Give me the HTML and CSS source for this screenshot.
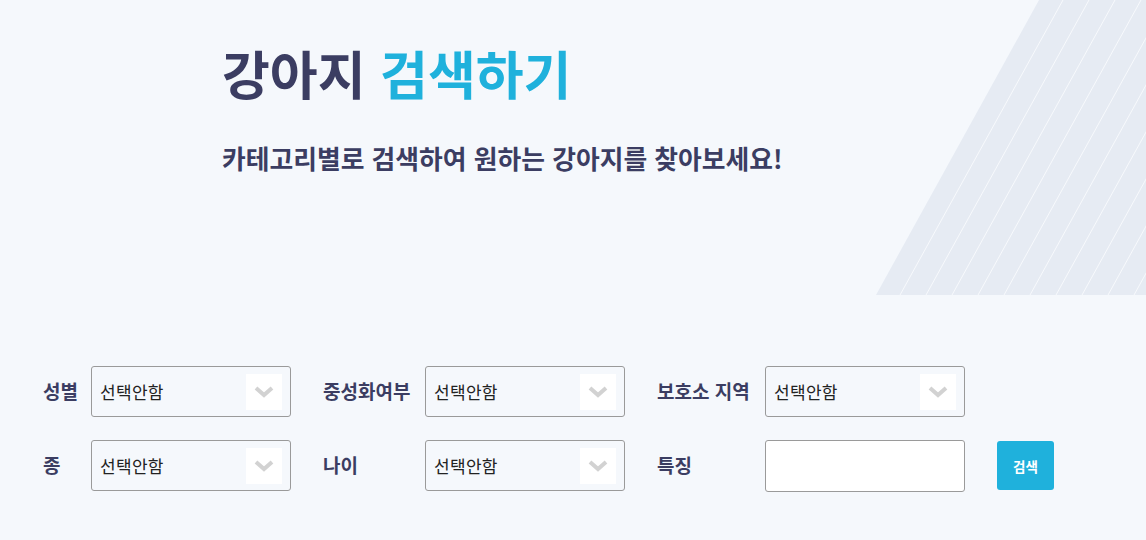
FILE: index.html
```html
<!DOCTYPE html>
<html lang="ko">
<head>
<meta charset="utf-8">
<link rel="stylesheet" href="styles.css">
</head>
<body>
<header class="hero">
  <svg class="hero-deco" viewBox="0 0 270 295" width="270" height="295" aria-hidden="true">
    <defs>
      <clipPath id="shape"><polygon points="0,295 163,0 270,0 270,295"/></clipPath>
    </defs>
    <polygon points="0,295 163,0 270,0 270,295" fill="#e6ebf3"/>
    <g clip-path="url(#shape)" stroke="#f7f9fc" stroke-width="1">
      <line x1="24" y1="295" x2="187" y2="0"/>
      <line x1="50" y1="295" x2="213" y2="0"/>
      <line x1="76" y1="295" x2="239" y2="0"/>
      <line x1="102" y1="295" x2="265" y2="0"/>
      <line x1="128" y1="295" x2="291" y2="0"/>
      <line x1="154" y1="295" x2="317" y2="0"/>
      <line x1="180" y1="295" x2="343" y2="0"/>
      <line x1="206" y1="295" x2="369" y2="0"/>
      <line x1="232" y1="295" x2="395" y2="0"/>
      <line x1="258" y1="295" x2="421" y2="0"/>
    </g>
  </svg>
  <h1 class="title">강아지 <span class="accent">검색하기</span></h1>
  <p class="subtitle">카테고리별로 검색하여 원하는 강아지를 찾아보세요!</p>
</header>

<form class="search">
  <label class="lbl">성별</label>
  <div class="sel"><span>선택안함</span><span class="chev"><svg viewBox="0 0 20 12" width="20" height="12"><path d="M2 2 L10 9 L18 2" fill="none" stroke="#d2d2d2" stroke-width="4"/></svg></span></div>
  <label class="lbl">중성화여부</label>
  <div class="sel"><span>선택안함</span><span class="chev"><svg viewBox="0 0 20 12" width="20" height="12"><path d="M2 2 L10 9 L18 2" fill="none" stroke="#d2d2d2" stroke-width="4"/></svg></span></div>
  <label class="lbl">보호소 지역</label>
  <div class="sel"><span>선택안함</span><span class="chev"><svg viewBox="0 0 20 12" width="20" height="12"><path d="M2 2 L10 9 L18 2" fill="none" stroke="#d2d2d2" stroke-width="4"/></svg></span></div>
  <div></div>

  <label class="lbl">종</label>
  <div class="sel"><span>선택안함</span><span class="chev"><svg viewBox="0 0 20 12" width="20" height="12"><path d="M2 2 L10 9 L18 2" fill="none" stroke="#d2d2d2" stroke-width="4"/></svg></span></div>
  <label class="lbl">나이</label>
  <div class="sel"><span>선택안함</span><span class="chev"><svg viewBox="0 0 20 12" width="20" height="12"><path d="M2 2 L10 9 L18 2" fill="none" stroke="#d2d2d2" stroke-width="4"/></svg></span></div>
  <label class="lbl">특징</label>
  <input class="txt" type="text">
  <button class="btn" type="button">검색</button>
</form>
</body>
</html>
```

FILE: styles.css
```css
* { box-sizing: border-box; }
html, body { margin: 0; padding: 0; }
body {
  background: #f5f8fc;
  font-family: "Noto Sans CJK KR", "Noto Sans", sans-serif;
  color: #3b3d62;
  width: 1146px;
  height: 540px;
  overflow: hidden;
}
.hero {
  position: relative;
  height: 295px;
  padding: 38px 0 0 222px;
}
.hero-deco {
  position: absolute;
  right: 0;
  top: 0;
}
.title {
  position: relative;
  margin: 0;
  font-size: 52px;
  line-height: 70px;
  font-weight: 700;
  color: #3b3d62;
}
.accent { color: #1fb1dc; }
.subtitle {
  position: relative;
  margin: 33px 0 0;
  font-size: 25.8px;
  line-height: 34px;
  font-weight: 700;
  color: #3b3d62;
}
.search {
  display: grid;
  grid-template-columns: 48px 232px 102px 232px 108px 232px 57px;
  grid-auto-rows: 51px;
  row-gap: 23px;
  align-items: center;
  margin: 71px 0 0 43px;
}
.lbl {
  font-size: 19px;
  font-weight: 700;
  color: #3b3d62;
  white-space: nowrap;
  padding-bottom: 3px;
}
.sel {
  width: 200px;
  height: 51px;
  border: 1px solid #9a9a9a;
  border-radius: 3px;
  display: flex;
  align-items: center;
  justify-content: space-between;
  padding: 0 8px 0 8px;
  font-size: 17px;
  letter-spacing: 0.3px;
  color: #222;
}
.chev {
  width: 36px;
  height: 36px;
  background: #fff;
  display: flex;
  align-items: center;
  justify-content: center;
}
.txt {
  width: 200px;
  height: 52px;
  border: 1px solid #9a9a9a;
  border-radius: 3px;
  background: #fff;
  margin: 0;
}
.btn {
  width: 57px;
  height: 49px;
  border: 0;
  border-radius: 3px;
  background: #1fb1dc;
  color: #fff;
  font-family: "Noto Sans CJK KR", sans-serif;
  font-size: 13.5px;
  font-weight: 700;
  padding: 0;
}
```
